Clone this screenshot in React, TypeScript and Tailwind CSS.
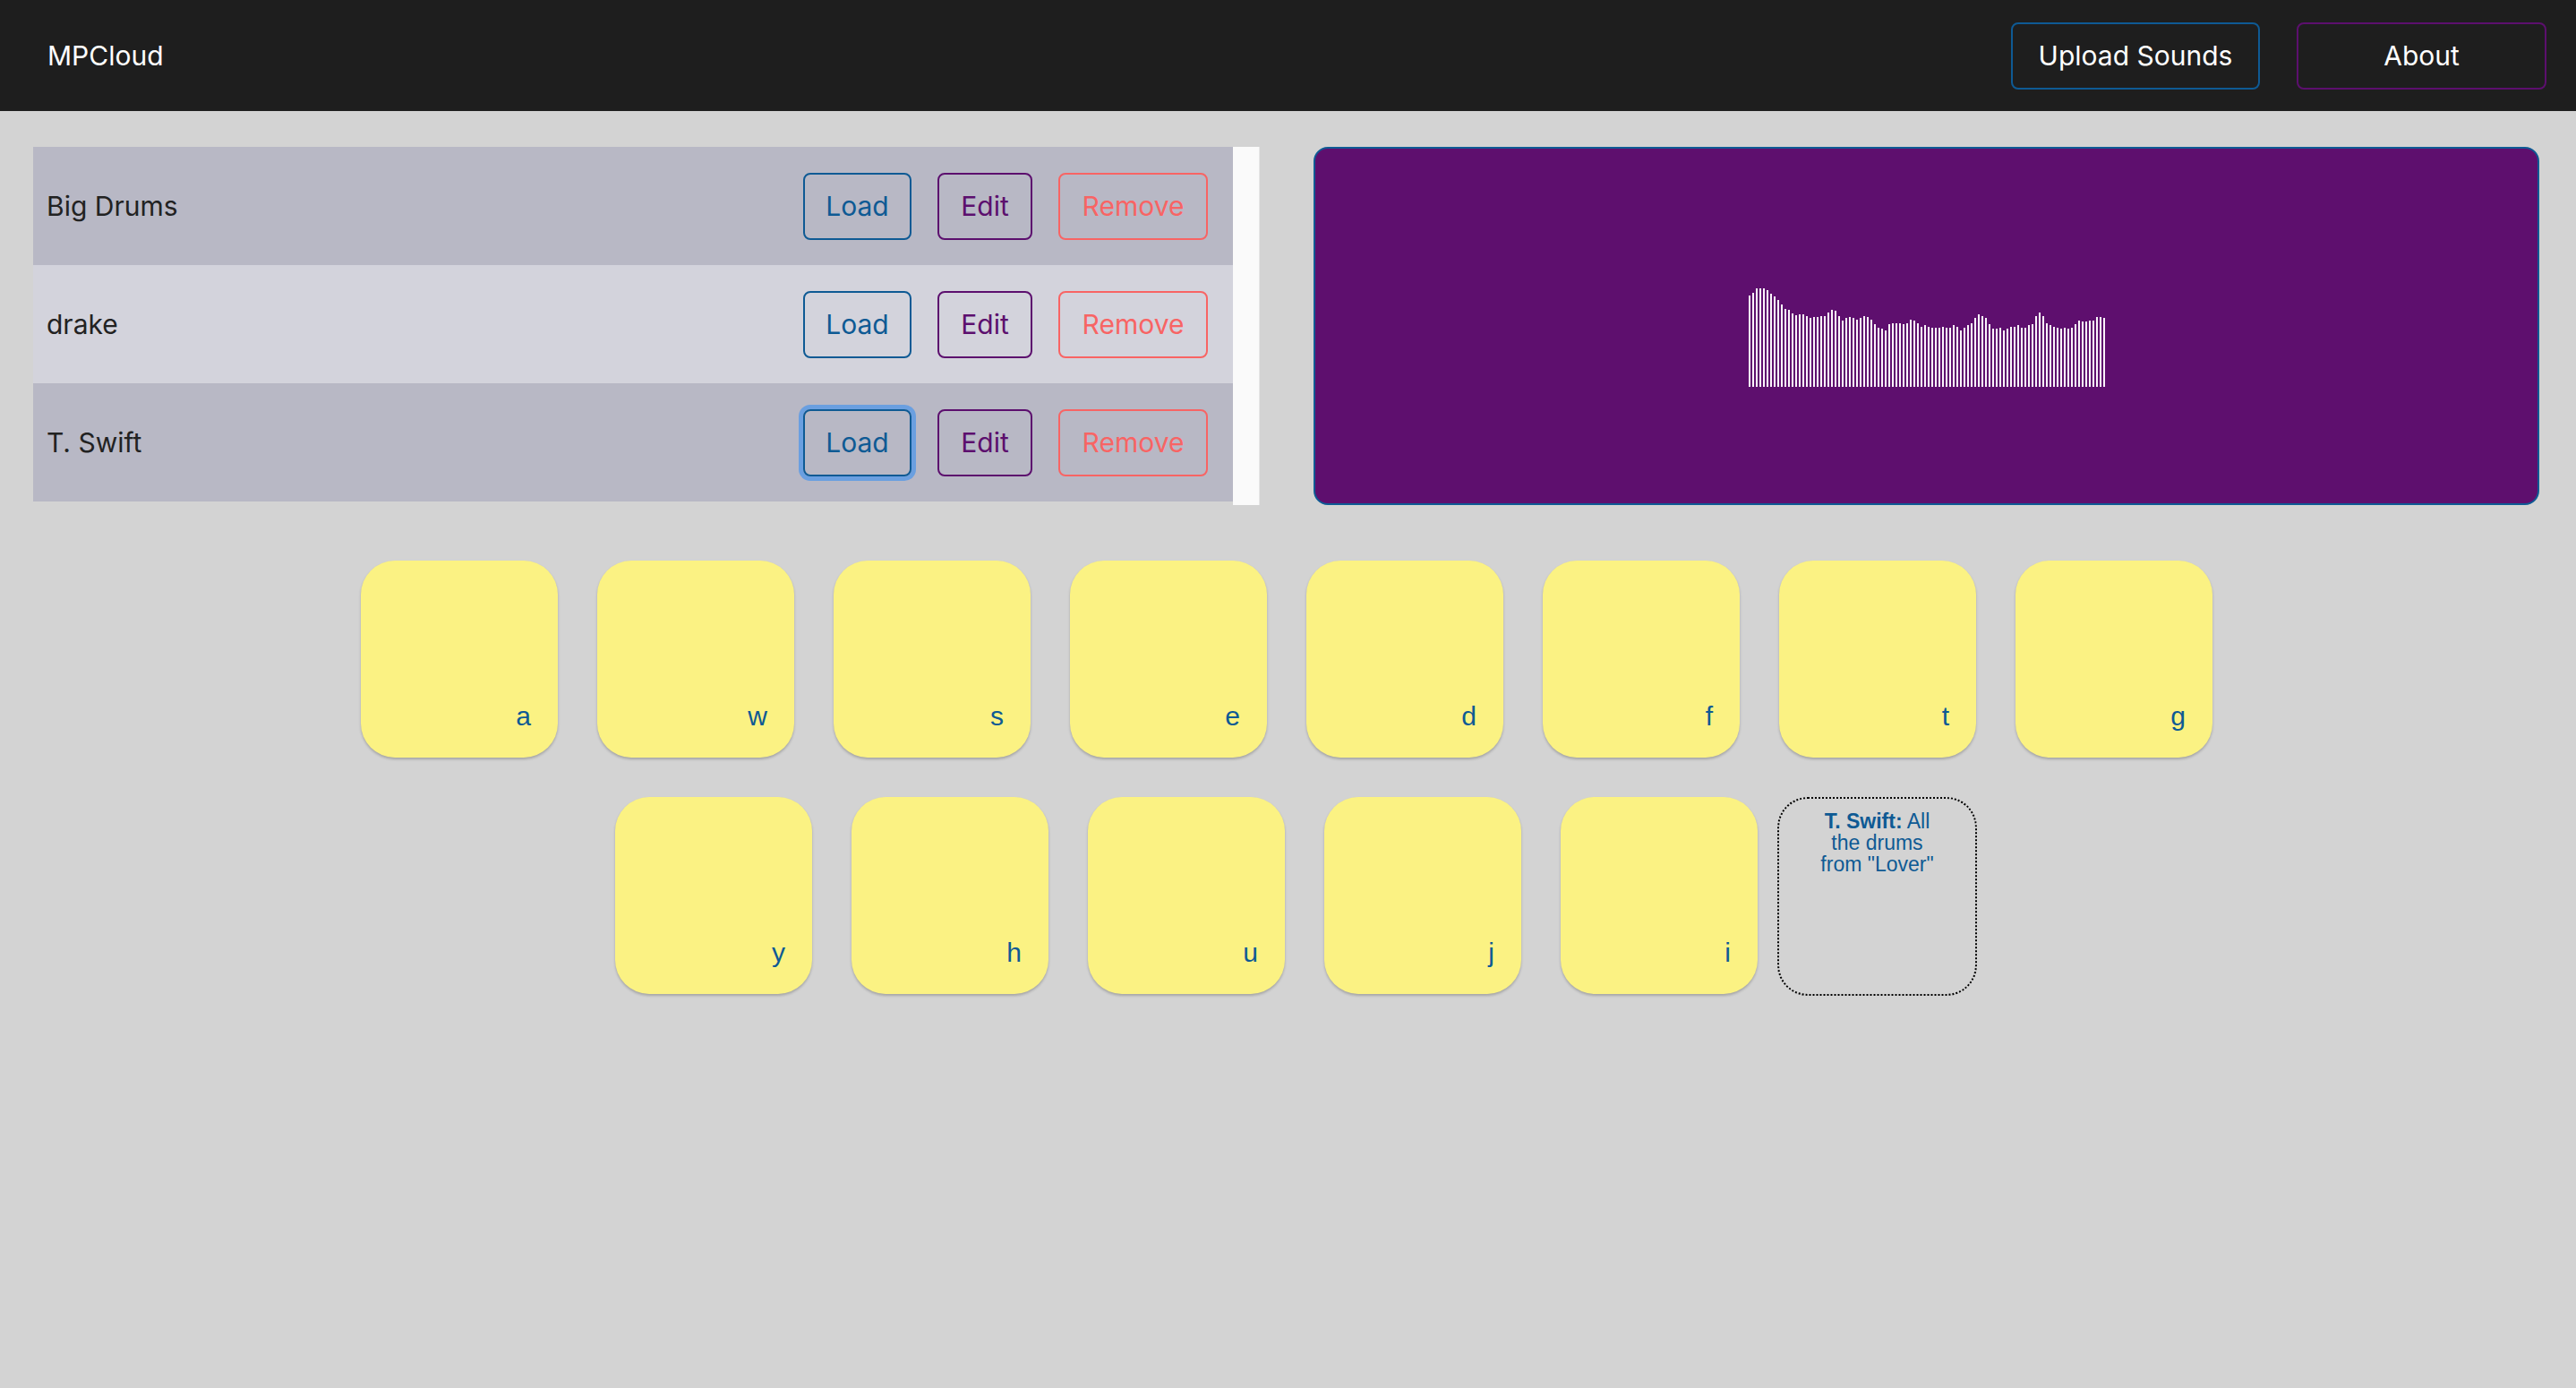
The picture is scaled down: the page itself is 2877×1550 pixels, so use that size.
import React from 'react';

interface SoundPack {
    name: string;
    focused?: boolean;
}

const packs: SoundPack[] = [
    { name: 'Big Drums' },
    { name: 'drake' },
    { name: 'T. Swift', focused: true },
];

const topKeys = ['a', 'w', 's', 'e', 'd', 'f', 't', 'g'];
const bottomKeys = ['y', 'h', 'u', 'j', 'i'];

// bar heights (px) read off the loaded sample's waveform
const wave = [
    102, 105, 110, 110, 110, 108, 104, 101, 97, 92, 87, 86, 82, 80, 81, 81, 79, 77, 78, 78,
    79, 79, 83, 86, 85, 79, 74, 77, 78, 77, 75, 77, 79, 78, 75, 70, 66, 65, 63, 70,
    71, 71, 71, 70, 71, 75, 74, 71, 67, 69, 67, 66, 66, 66, 67, 66, 66, 69, 67, 63,
    66, 69, 71, 77, 81, 79, 77, 70, 65, 65, 66, 63, 65, 67, 67, 69, 66, 66, 69, 70,
    79, 83, 79, 71, 69, 67, 66, 65, 66, 65, 66, 70, 74, 73, 73, 74, 74, 78, 78, 77,
];

function Pad({ letter }: { letter: string }) {
    return (
        <div className="w-[220px] h-[220px] rounded-[38px] bg-[#fbf283] shadow-[0_2px_3px_rgba(0,0,0,0.22)] flex items-end justify-end pr-[30px] pb-[31px]">
            <span className="font-['Liberation_Sans',Arial,sans-serif] text-[30px] leading-none text-[#0e5a94]">{letter}</span>
        </div>
    );
}

export default function App() {
    return (
        <div className="min-h-screen bg-[#d3d3d3] font-['Inter','Noto_Sans',sans-serif]">
            {/* Navbar */}
            <header className="h-[124px] bg-[#1e1e1e] flex items-center justify-between pl-[53px] pr-[33px]">
                <div className="text-white text-[30px] leading-none">MPCloud</div>
                <div className="flex gap-[41px]">
                    <button className="w-[278px] h-[75px] border-2 border-[#0e5a94] rounded-[8px] text-white text-[30px]">
                        Upload Sounds
                    </button>
                    <button className="w-[279px] h-[75px] border-2 border-[#5c0f6e] rounded-[8px] text-white text-[30px]">
                        About
                    </button>
                </div>
            </header>

            {/* Sound list + waveform */}
            <div className="flex pl-[37px] pr-[41px] pt-[40px] gap-[60px]">
                <div className="w-[1370px] h-[400px] flex">
                    <div className="flex-1 flex flex-col">
                        {packs.map((p, i) => (
                            <div
                                key={p.name}
                                className={`h-[132px] flex items-center justify-between pl-[15px] pr-[28px] ${i % 2 === 0 ? 'bg-[#b8b8c5]' : 'bg-[#d3d3dc]'}`}
                            >
                                <span className="text-[30px] text-[#222] leading-none">{p.name}</span>
                                <div className="flex gap-[29px]">
                                    <button
                                        className={`w-[121px] h-[75px] border-2 border-[#0e5a94] rounded-[8px] text-[30px] text-[#0e5a94] ${p.focused ? 'ring-[5px] ring-[#6a9fe0]' : ''}`}
                                    >
                                        Load
                                    </button>
                                    <button className="w-[106px] h-[75px] border-2 border-[#5c0f6e] rounded-[8px] text-[30px] text-[#5c0f6e]">
                                        Edit
                                    </button>
                                    <button className="w-[167px] h-[75px] border-2 border-[#f86464] rounded-[8px] text-[30px] text-[#f86464]">
                                        Remove
                                    </button>
                                </div>
                            </div>
                        ))}
                    </div>
                    {/* scrollbar track */}
                    <div className="w-[30px] h-full bg-[#fafafa] border-r border-[#e6e6e6]" />
                </div>

                <div className="flex-1 h-[400px] rounded-[16px] border-2 border-[#0e5a94] bg-[#5e0f6e] flex items-center justify-center">
                    <div className="h-[136px] flex items-end gap-[2px]">
                        {wave.map((h, i) => (
                            <div key={i} className="w-[2px] bg-[#faf4fb]" style={{ height: h }} />
                        ))}
                    </div>
                </div>
            </div>

            {/* Pads */}
            <div className="mt-[62px] flex flex-col gap-[44px]">
                <div className="flex justify-center gap-[44px] pr-[3px]">
                    {topKeys.map(k => <Pad key={k} letter={k} />)}
                </div>
                <div className="flex justify-center gap-[44px] pl-[18px]">
                    {bottomKeys.map(k => <Pad key={k} letter={k} />)}
                    <div className="w-[223px] h-[222px] -ml-[22px] rounded-[34px] border-2 border-dotted border-black px-[36px] pt-[13px] text-center font-['Liberation_Sans',Arial,sans-serif] text-[23px] leading-[24px] text-[#0e5a94]">
                        <b>T. Swift:</b> All the drums from "Lover"
                    </div>
                </div>
            </div>
        </div>
    );
}
